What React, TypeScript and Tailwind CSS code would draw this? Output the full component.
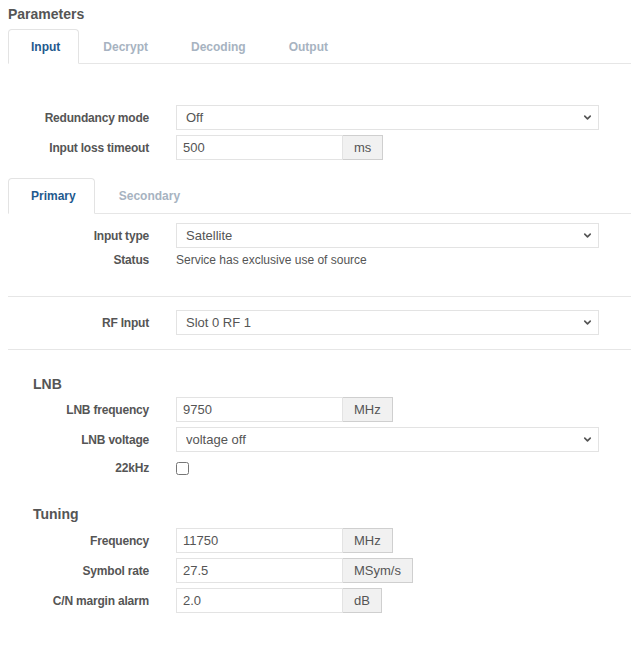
import { ChevronDown } from 'lucide-react'

function Label({ children }: { children: React.ReactNode }) {
  return (
    <div className="w-[141px] shrink-0 text-right text-[12px] font-bold leading-[14px] tracking-[-0.2px] text-[#555]">
      {children}
    </div>
  )
}

function SelectRow({ label, value }: { label: string; value: string }) {
  return (
    <div className="flex h-[25px] items-center gap-[27px]">
      <Label>{label}</Label>
      <div className="relative h-full w-[423px]">
        <select
          defaultValue={value}
          className="h-full w-full appearance-none border border-[#e3e3e3] bg-white pl-[9px] text-[13px] text-[#555] outline-none"
        >
          <option>{value}</option>
        </select>
        <ChevronDown
          className="pointer-events-none absolute right-[6px] top-[7px] h-[11px] w-[11px] text-[#555]"
          strokeWidth={3.5}
        />
      </div>
    </div>
  )
}

function UnitRow({ label, value, unit }: { label: string; value: string; unit: string }) {
  return (
    <div className="flex h-[25px] items-center gap-[27px]">
      <Label>{label}</Label>
      <div className="flex h-full">
        <input
          defaultValue={value}
          className="h-full w-[167px] border border-[#e3e3e3] bg-white pl-[6px] text-[13px] text-[#555] outline-none"
        />
        <span className="flex h-full items-center border border-l-0 border-[#cfcfcf] bg-[#f1f1f1] px-[11px] text-[13px] text-[#555]">
          {unit}
        </span>
      </div>
    </div>
  )
}

function Tabs({ items, active, height }: { items: string[]; active: string; height: string }) {
  return (
    <div className="flex border-b border-[#e6e6e6]">
      {items.map((item) => {
        const on = item === active
        return (
          <div
            key={item}
            className={`-mb-px mr-[1px] flex ${height} items-center rounded-t-[4px] border pl-[22px] pr-[18px] text-[12px] font-bold ${
              on ? 'border-[#e3e3e3] border-b-white bg-white text-[#1f5a8e]' : 'border-transparent text-[#a7b3c1]'
            }`}
          >
            {item}
          </div>
        )
      })}
    </div>
  )
}

export default function App() {
  return (
    <div className="min-h-[645px] bg-white pl-[8px] pt-[6px] font-['Liberation_Sans',Arial,sans-serif]">
      <h3 className="text-[14px] font-bold leading-[17px] text-[#555]">Parameters</h3>

      <div className="mt-[6px]">
        <Tabs items={['Input', 'Decrypt', 'Decoding', 'Output']} active="Input" height="h-[35px]" />
      </div>

      <div className="pt-[41px]">
        <div className="flex flex-col gap-[5px]">
          <SelectRow label="Redundancy mode" value="Off" />
          <UnitRow label="Input loss timeout" value="500" unit="ms" />
        </div>

        <div className="mt-[18px]">
          <Tabs items={['Primary', 'Secondary']} active="Primary" height="h-[36px]" />
        </div>

        <div className="flex flex-col gap-[5px] pt-[9px]">
          <SelectRow label="Input type" value="Satellite" />
          <div className="flex items-center gap-[27px]">
            <Label>Status</Label>
            <div className="text-[12px] leading-[14px] text-[#555]">Service has exclusive use of source</div>
          </div>
        </div>

        <div className="mt-[29px] border-t border-[#e6e6e6]" />

        <div className="pt-[13px]">
          <SelectRow label="RF Input" value="Slot 0 RF 1" />
        </div>

        <div className="mt-[14px] border-t border-[#e6e6e6]" />

        <h4 className="ml-[25px] mt-[26px] text-[14px] font-bold leading-[17px] text-[#555]">LNB</h4>
        <div className="mt-[4px] flex flex-col gap-[5px]">
          <UnitRow label="LNB frequency" value="9750" unit="MHz" />
          <SelectRow label="LNB voltage" value="voltage off" />
          <div className="flex h-[22px] items-center gap-[27px]">
            <Label>22kHz</Label>
            <input type="checkbox" className="h-[13px] w-[13px]" />
          </div>
        </div>

        <h4 className="ml-[25px] mt-[27px] text-[14px] font-bold leading-[17px] text-[#555]">Tuning</h4>
        <div className="mt-[5px] flex flex-col gap-[5px] pb-[30px]">
          <UnitRow label="Frequency" value="11750" unit="MHz" />
          <UnitRow label="Symbol rate" value="27.5" unit="MSym/s" />
          <UnitRow label="C/N margin alarm" value="2.0" unit="dB" />
        </div>
      </div>
    </div>
  )
}
